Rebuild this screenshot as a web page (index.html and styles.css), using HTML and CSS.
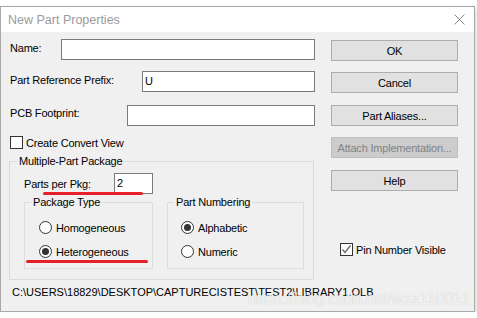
FILE: index.html
```html
<!DOCTYPE html>
<html>
	<head>
		<meta charset="utf-8">
		<title>New Part Properties</title>
		<link rel="stylesheet" href="styles.css">
	</head>
	<body>
		<div class="window">
			<div class="titlebar">
				<span class="title">New Part Properties</span>
				<svg class="close" width="11" height="11" viewBox="0 0 11 11"><path d="M0.5 0.5L10.5 10.5M10.5 0.5L0.5 10.5" stroke="#8a8a8a" stroke-width="1" fill="none"/></svg>
			</div>
			<div class="dialog">
				<div class="main">
					<div class="left">
						<div class="field-row row-name"><label>Name:</label><div class="edit w-name"></div></div>
						<div class="field-row row-prefix"><label>Part Reference Prefix:</label><div class="edit w-prefix">U</div></div>
						<div class="field-row row-pcb"><label>PCB Footprint:</label><div class="edit w-pcb"></div></div>
						<div class="check-row convert"><span class="check"></span>Create Convert View</div>

						<fieldset class="group outer">
							<legend>Multiple-Part Package</legend>
							<div class="pkg-row"><label>Parts per Pkg:</label><div class="edit w-pkg">2</div></div>
							<div class="subgroups">
								<fieldset class="group sub type">
									<legend>Package Type</legend>
									<div class="radio-row first"><span class="radio"></span>Homogeneous</div>
									<div class="radio-row"><span class="radio on"></span>Heterogeneous</div>
								</fieldset>
								<fieldset class="group sub numbering">
									<legend>Part Numbering</legend>
									<div class="radio-row first"><span class="radio on"></span>Alphabetic</div>
									<div class="radio-row"><span class="radio"></span>Numeric</div>
								</fieldset>
							</div>
						</fieldset>
					</div>

					<div class="right">
						<div class="btn b-ok">OK</div>
						<div class="btn b-cancel">Cancel</div>
						<div class="btn b-alias">Part Aliases...</div>
						<div class="btn b-attach disabled">Attach Implementation...</div>
						<div class="btn b-help">Help</div>
						<div class="check-row pin">
							<span class="check"><svg width="11" height="11" viewBox="0 0 11 11"><path d="M1.5 5.5L4 8.5L9.5 1.5" stroke="#6b6b6b" stroke-width="1.4" fill="none"/></svg></span>
							Pin Number Visible
						</div>
					</div>
				</div>
				<div class="path">C:\USERS\18829\DESKTOP\CAPTURECISTEST\TEST2\LIBRARY1.OLB</div>
			</div>
		</div>

		<!-- red marks drawn on top of the screenshot -->
		<div class="mark mark-pkg"></div>
		<div class="mark mark-type"></div>
		<div class="watermark">https://blog.csdn.net/wzz110011</div>
	</body>
</html>
```

FILE: styles.css
```css
body{
	margin: 0;
	background: #fff;
	font-family: "Liberation Sans", Arial, sans-serif;
	font-size: 11px;
	letter-spacing: -0.2px;
	color: #000;
}
.window{
	margin-top: 6px;
	width: 475px;
	height: 306px;
	box-sizing: border-box;
	border: 1px solid #a9a9a9;
	box-shadow: 1px 2px 4px rgba(0,0,0,0.18);
	display: flex;
	flex-direction: column;
}
.titlebar{
	height: 25px;
	flex: none;
	background: #fff;
	display: flex;
	align-items: center;
	justify-content: space-between;
	padding: 0 9px 0 7px;
}
.title{
	font-size: 12.5px;
	letter-spacing: 0;
	color: #9b9b9b;
}
.dialog{
	flex: 1;
	background: #f0f0f0;
}
.main{
	display: flex;
	padding-left: 8px;
}
.left{
	width: 306px;
}
.right{
	width: 127px;
	margin-left: 16px;
	display: flex;
	flex-direction: column;
}

/* edit boxes */
.field-row{
	display: flex;
	align-items: center;
	height: 21px;
}
.field-row label{
	padding-left: 1px;
}
.edit{
	margin-left: auto;
	height: 21px;
	box-sizing: border-box;
	border: 1px solid #7a7a7a;
	background: #fff;
	padding: 0 2px;
	line-height: 19px;
}
.row-name{ margin-top: 7px; }
.row-name label{ padding-bottom: 4px; }
.row-prefix{ margin-top: 11px; }
.row-prefix label{ padding-bottom: 3px; }
.row-pcb{ margin-top: 13px; }
.row-pcb label{ padding-bottom: 6px; }
.w-name{ width: 254px; }
.w-prefix{ width: 173px; }
.w-pcb{ width: 188px; }

/* check boxes and radios */
.check-row{
	display: flex;
	align-items: center;
	gap: 3px;
	height: 13px;
}
.convert{
	margin-top: 10px;
	padding-left: 1px;
}
.pin{
	margin-top: 52px;
	margin-left: 9px;
}
.check{
	width: 13px;
	height: 13px;
	flex: none;
	box-sizing: border-box;
	border: 1px solid #333;
	background: #fff;
	display: flex;
}
.radio{
	width: 13px;
	height: 13px;
	flex: none;
	box-sizing: border-box;
	border: 1px solid #333;
	border-radius: 50%;
	background: #fff;
	display: flex;
	align-items: center;
	justify-content: center;
}
.radio.on::after{
	content: "";
	width: 7px;
	height: 7px;
	border-radius: 50%;
	background: #333;
}
.radio-row{
	display: flex;
	align-items: center;
	gap: 4px;
	height: 13px;
	margin-top: 11px;
}
.radio-row.first{ margin-top: 12px; }
.type .radio-row{ padding-left: 14px; }
.numbering .radio-row{ padding-left: 13px; }

/* group boxes */
.group{
	margin: 0;
	padding: 0;
	border: 1px solid #dcdcdc;
	min-width: 0;
	box-sizing: border-box;
}
.group legend{
	padding: 0 2px;
	line-height: 13px;
	margin-left: 6px;
}
.outer{
	margin: 6px 1px 0 0;
	height: 125px;
}
.outer > legend{ margin-left: 7px; }
.pkg-row{
	display: flex;
	align-items: center;
	height: 21px;
	margin: 5px 0 0 14px;
}
.pkg-row label{ width: 90px; }
.w-pkg{
	margin-left: 0;
	width: 39px;
}
.subgroups{
	display: flex;
	gap: 14px;
	margin: 2px 0 0 14px;
}
.sub{ height: 73px; }
.type{ width: 129px; }
.numbering{ width: 137px; }

/* buttons */
.btn{
	height: 21px;
	box-sizing: border-box;
	border: 1px solid #adadad;
	background: #e1e1e1;
	display: flex;
	align-items: center;
	justify-content: center;
}
.btn.disabled{
	background: #cccccc;
	border-color: #bfbfbf;
	color: #838383;
}
.b-ok{ margin-top: 8px; }
.b-cancel{ margin-top: 11px; }
.b-alias{ margin-top: 12px; }
.b-attach{ margin-top: 11px; }
.b-help{ margin-top: 12px; }

.path{
	margin-top: 6px;
	padding-left: 11px;
	line-height: 13px;
	letter-spacing: 0;
}

/* annotations over the picture */
.mark{
	position: absolute;
	height: 3px;
	border-radius: 2px;
	background: #e8202a;
}
.mark-pkg{ left: 43px; top: 192px; width: 100px; }
.mark-type{ left: 26px; top: 260px; width: 122px; }
.watermark{
	position: absolute;
	left: 248px;
	top: 289px;
	font-size: 17px;
	letter-spacing: -0.6px;
	white-space: nowrap;
	color: rgba(255,255,255,0.75);
	text-shadow: 0 0 1px rgba(0,0,0,0.2);
}
```
